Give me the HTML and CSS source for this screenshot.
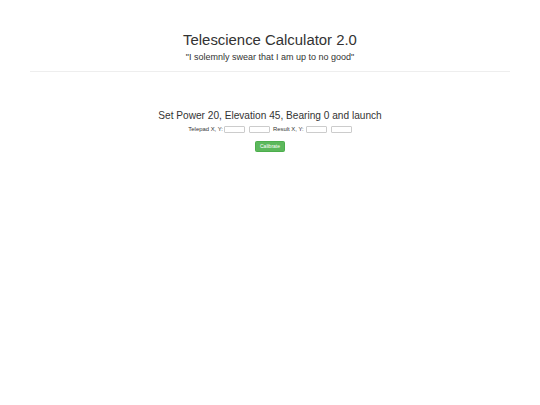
FILE: index.html
```html
<!DOCTYPE html>
<html lang="en">
<head>
    <meta charset="UTF-8">
    <title>Telescience Calculator 2.0</title>
    <link rel="stylesheet" href="styles.css">
</head>
<body>
    <div class="page-header">
        <h2 class="title">Telescience Calculator 2.0</h2>
        <p class="lead">"I solemnly swear that I am up to no good"</p>
    </div>
    <hr class="divider">

    <div class="calibration">
        <h3 class="step">Set Power 20, Elevation 45, Bearing 0 and launch</h3>
        <form class="calib-form" onsubmit="return false">
            <label class="field-label" for="padX">Telepad X, Y:</label>
            <input class="coord" id="padX" type="text">
            <input class="coord coord-y" id="padY" type="text">
            <label class="field-label label-result" for="resX">Result X, Y:</label>
            <input class="coord" id="resX" type="text">
            <input class="coord coord-y" id="resY" type="text">
        </form>
        <button class="btn-calibrate" type="button">Calibrate</button>
    </div>
</body>
</html>
```

FILE: styles.css
```css
body {
    margin: 0;
    font-family: 'Liberation Sans', Arial, Helvetica, sans-serif;
    color: #333;
    background: #fff;
}

.page-header {
    text-align: center;
    padding-top: 31.5px;
}

.title {
    margin: 0;
    font-size: 14.9px;
    line-height: 17px;
    font-weight: normal;
}

.lead {
    margin: 3.4px 0 0;
    font-size: 9px;
    line-height: 11px;
}

.divider {
    margin: 8px 30px 0;
    border: 0;
    border-top: 1px solid #eee;
}

.calibration {
    display: flex;
    flex-direction: column;
    align-items: center;
    padding-top: 38px;
}

.step {
    margin: 0;
    font-size: 10.15px;
    line-height: 12px;
    font-weight: normal;
}

.calib-form {
    display: flex;
    align-items: center;
    margin: 4px 0 0;
    height: 8px;
}

.field-label {
    font-size: 5.9px;
    line-height: 7px;
    margin-right: 1px;
}

.label-result {
    margin-left: 3px;
    margin-right: 2px;
}

.coord {
    box-sizing: border-box;
    width: 21px;
    height: 7px;
    padding: 0;
    border: 1px solid #ccc;
    border-radius: 1px;
    background: #fff;
    font-size: 5px;
}

.coord-y {
    margin-left: 4px;
}

.btn-calibrate {
    margin-top: 7px;
    padding: 1.5px 4px;
    border: 1px solid #4cae4c;
    border-radius: 1.5px;
    background: #5cb85c;
    color: #fff;
    font-family: 'Liberation Sans', Arial, sans-serif;
    font-size: 5px;
    line-height: 6px;
    cursor: pointer;
}
```
